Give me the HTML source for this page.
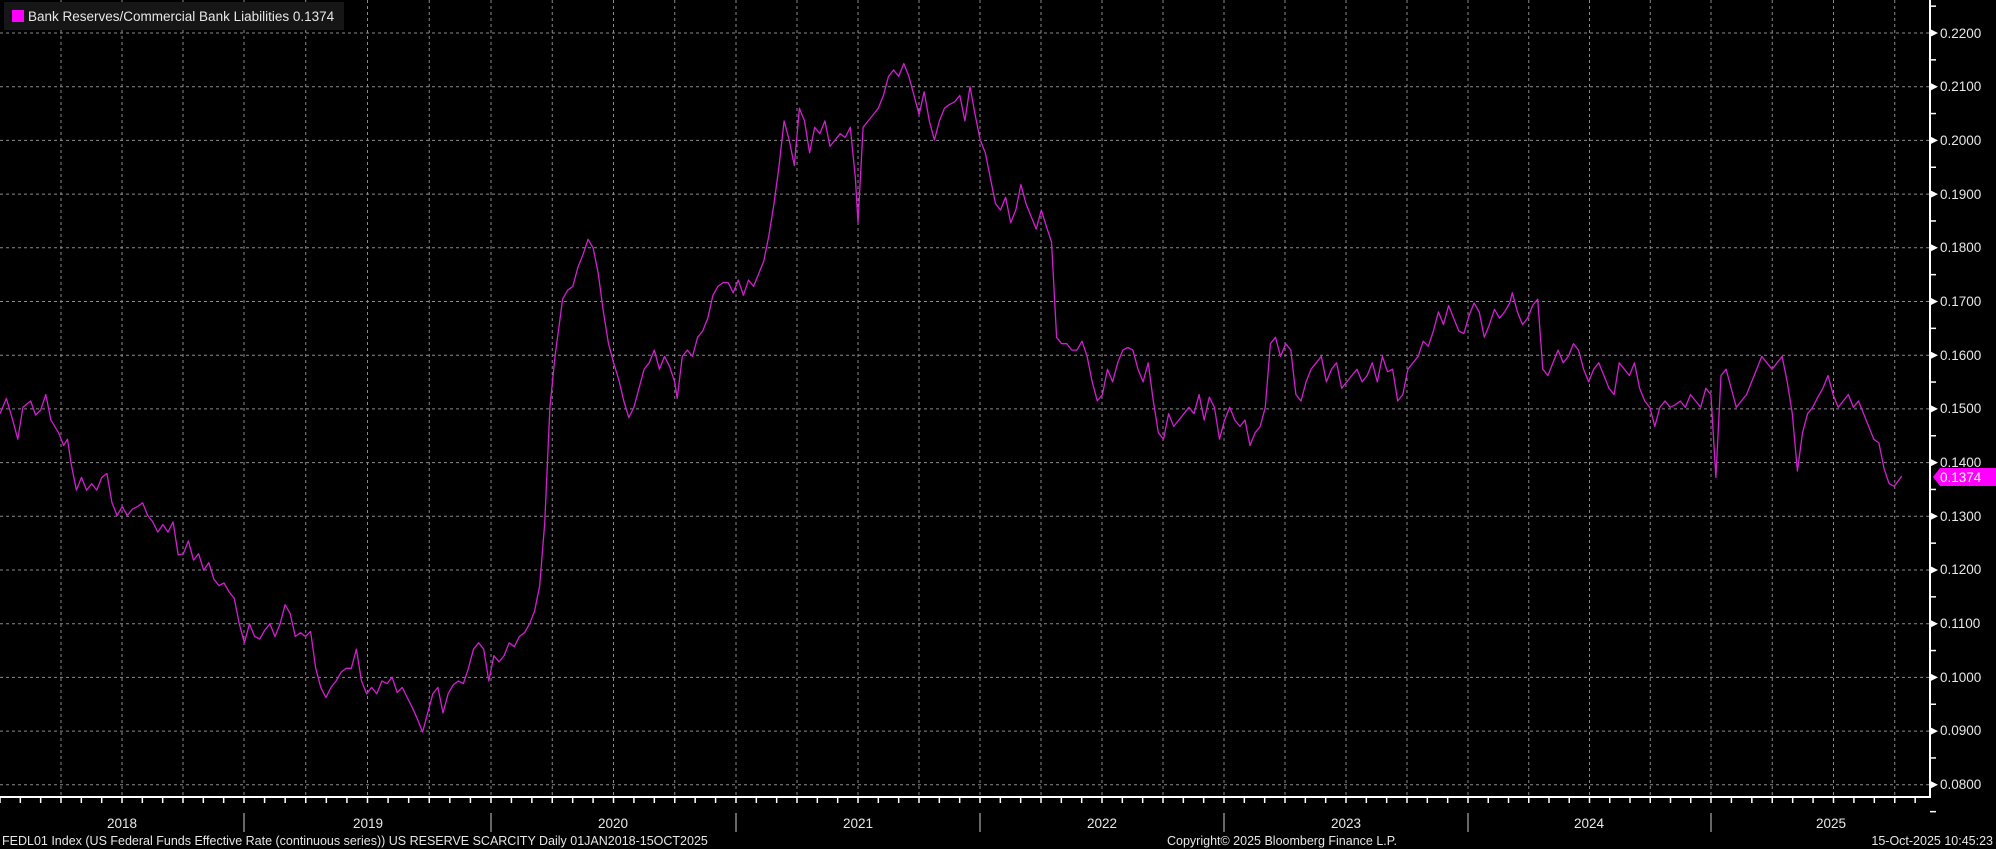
<!DOCTYPE html>
<html><head><meta charset="utf-8"><style>
html,body{margin:0;padding:0;background:#000;width:1996px;height:849px;overflow:hidden}
svg{display:block}
text{font-family:"Liberation Sans",sans-serif;fill:#e6e6e6}
</style></head><body>
<svg id="s" width="1996" height="849" viewBox="0 0 1996 849" xmlns="http://www.w3.org/2000/svg">
<g id="grid" stroke="#8a8a8a" stroke-width="1" stroke-dasharray="3,3"></g>
<g id="ticks" stroke="#fff" stroke-width="1.5"></g>
<polyline id="ln" fill="none" stroke="#d21ed2" stroke-width="1.3" stroke-linejoin="round" points=""/>
<line x1="1930" y1="0" x2="1930" y2="797" stroke="#fff" stroke-width="2"/>
<line x1="0" y1="797" x2="1931" y2="797" stroke="#fff" stroke-width="2"/>
<g font-size="13.5">
<text x="1940" y="38">0.2200</text>
<text x="1940" y="91">0.2100</text>
<text x="1940" y="145">0.2000</text>
<text x="1940" y="199">0.1900</text>
<text x="1940" y="252">0.1800</text>
<text x="1940" y="306">0.1700</text>
<text x="1940" y="360">0.1600</text>
<text x="1940" y="413">0.1500</text>
<text x="1940" y="467">0.1400</text>
<text x="1940" y="521">0.1300</text>
<text x="1940" y="574">0.1200</text>
<text x="1940" y="628">0.1100</text>
<text x="1940" y="682">0.1000</text>
<text x="1940" y="735">0.0900</text>
<text x="1940" y="789">0.0800</text>
</g>
<polygon points="1933,477 1940,468 1996,468 1996,486 1940,486" fill="#ff00ff"/>
<text x="1940" y="482" font-size="13.5" style="fill:#fff">0.1374</text>
<rect x="4" y="2" width="340" height="28" fill="#161616"/>
<rect x="12" y="10" width="12" height="12" fill="#ff00ff"/>
<text x="28" y="21" font-size="13.5">Bank Reserves/Commercial Bank Liabilities 0.1374</text>
<g font-size="13.5" text-anchor="middle">
<text x="122" y="828">2018</text>
<text x="368" y="828">2019</text>
<text x="613" y="828">2020</text>
<text x="858" y="828">2021</text>
<text x="1102" y="828">2022</text>
<text x="1346" y="828">2023</text>
<text x="1589" y="828">2024</text>
<text x="1831" y="828">2025</text>
</g>
<g font-size="12.5">
<text x="2" y="845">FEDL01 Index (US Federal Funds Effective Rate (continuous series)) US RESERVE SCARCITY Daily 01JAN2018-15OCT2025</text>
<text x="1167" y="845">Copyright© 2025 Bloomberg Finance L.P.</text>
<text x="1993" y="845" text-anchor="end">15-Oct-2025 10:45:23</text>
</g>
</svg>
<script>
var ns="http://www.w3.org/2000/svg",g=document.getElementById('grid'),t=document.getElementById('ticks');
function L(p,x1,y1,x2,y2,st){var l=document.createElementNS(ns,'line');l.setAttribute('x1',x1);l.setAttribute('y1',y1);l.setAttribute('x2',x2);l.setAttribute('y2',y2);if(st)l.setAttribute('style',st);p.appendChild(l);}
for(var k=0;k<=14;k++){var y=33+53.7*k;L(g,0,y,1930,y);
 var tr=document.createElementNS(ns,'polygon');tr.setAttribute('points',(1930)+','+(y-4)+' 1938,'+y+' 1930,'+(y+4));tr.setAttribute('fill','#fff');document.getElementById('s').appendChild(tr);
 L(t,1930,y+26.85,1936,y+26.85);}
L(t,1930,33-26.85,1936,33-26.85);
var yb=[0,244,491,736,980,1224,1468,1711,1956];
for(var i=0;i<8;i++){var a=yb[i],w=yb[i+1]-a;
 for(var q=0;q<4;q++){var x=a+w*q/4;if(x>0)L(g,x,0,x,797);}
 for(var m=0;m<12;m++){var x=a+w*m/12;if(x<1930)L(t,x,797,x,803);}
 if(a>0)L(t,a,813,a,832,'stroke:#888;stroke-width:1.5');}
var p=[0,325,5,313,10,330,14,345,18,320,24,315,28,326,32,322,36,310,40,330,46,340,50,350,53,345,56,365,60,385,64,375,68,385,72,380,76,385,80,375,84,372,88,395,92,405,96,398,100,405,104,400,108,398,112,395,116,405,120,410,124,418,128,412,132,418,136,410,140,436,144,435,148,425,152,440,156,435,160,448,164,442,168,455,172,460,176,458,180,465,184,470,188,490,192,505,196,490,200,500,204,502,208,495,212,490,216,500,220,490,224,475,228,482,232,500,236,497,240,500,244,496,248,525,252,540,256,548,260,540,264,535,268,528,272,525,276,525,280,510,284,535,288,545,292,540,296,545,300,535,304,537,308,532,312,544,316,540,320,548,324,556,328,565,332,575,336,560,340,545,344,540,348,560,352,545,356,538,360,535,364,537,368,525,372,510,376,505,380,510,384,535,388,515,392,520,396,515,400,505,404,508,408,500,412,497,416,490,420,480,424,460,428,410,432,320,436,280,440,250,442,235,446,228,450,225,454,210,458,200,462,188,466,195,470,215,474,245,478,270,482,285,486,298,490,315,494,328,498,320,502,305,506,290,510,285,514,275,518,290,522,280,526,288,530,300,532,313,536,280,540,275,544,280,548,265,552,260,556,250,560,232,564,225,568,222,572,222,576,230,580,220,584,232,588,220,592,225,596,215,600,205,604,185,608,160,612,130,616,95,620,110,624,130,628,85,632,95,636,120,640,100,644,105,648,95,652,115,656,110,660,105,664,108,668,100,672,140,674,175,678,100,682,95,686,90,690,85,694,75,698,60,702,55,706,60,710,50,714,60,718,75,722,90,726,72,730,95,734,110,738,95,742,85,746,82,750,80,754,75,758,95,762,68,766,90,770,110,774,120,778,140,782,160,786,165,790,155,794,175,798,165,802,145,806,160,810,170,814,180,818,165,822,178,826,190,830,265,834,270,838,270,842,275,846,275,850,268,854,280,858,300,862,315,866,310,870,290,874,300,878,285,882,275,886,273,890,275,894,290,898,300,902,285,906,315,910,340,914,345,918,325,922,335,926,330,930,325,934,320,938,325,942,310,946,330,950,312,954,320,958,345,962,330,966,320,970,330,974,335,978,330,982,350,986,340,990,335,994,320,998,270,1002,265,1006,280,1010,270,1014,275,1018,310,1022,315,1026,300,1030,290,1034,285,1038,280,1042,300,1046,290,1050,285,1054,305,1058,300,1062,295,1066,290,1070,300,1074,295,1078,285,1082,300,1086,280,1090,292,1094,290,1098,315,1102,310,1106,290,1110,285,1114,280,1118,268,1122,272,1126,260,1130,245,1134,255,1138,240,1142,250,1146,260,1150,262,1154,248,1158,238,1162,245,1166,265,1170,255,1174,243,1178,250,1182,245,1186,238,1188,230,1192,245,1196,255,1200,250,1204,240,1208,235,1212,290,1216,295,1220,285,1224,275,1228,285,1232,280,1236,270,1240,275,1244,290,1248,300,1252,290,1256,285,1260,295,1264,305,1268,310,1272,285,1276,290,1280,295,1284,285,1288,305,1292,315,1296,320,1300,335,1304,320,1308,315,1312,320,1316,318,1320,315,1324,320,1328,310,1332,315,1336,320,1340,305,1344,310,1348,375,1352,295,1356,290,1360,305,1364,320,1368,315,1372,310,1376,300,1380,290,1384,280,1388,285,1392,290,1396,285,1400,280,1404,300,1408,325,1412,370,1416,340,1420,325,1424,320,1428,312,1432,305,1436,295,1440,310,1444,320,1448,315,1452,310,1456,320,1460,315,1464,325,1468,335,1472,345,1476,348,1480,368,1484,380,1488,382,1494,374];
var s=1996/1568,out=[];for(var i=0;i<p.length;i+=2)out.push((p[i]*s).toFixed(1)+','+(p[i+1]*s).toFixed(1));
document.getElementById('ln').setAttribute('points',out.join(' '));
</script>
</body></html>
